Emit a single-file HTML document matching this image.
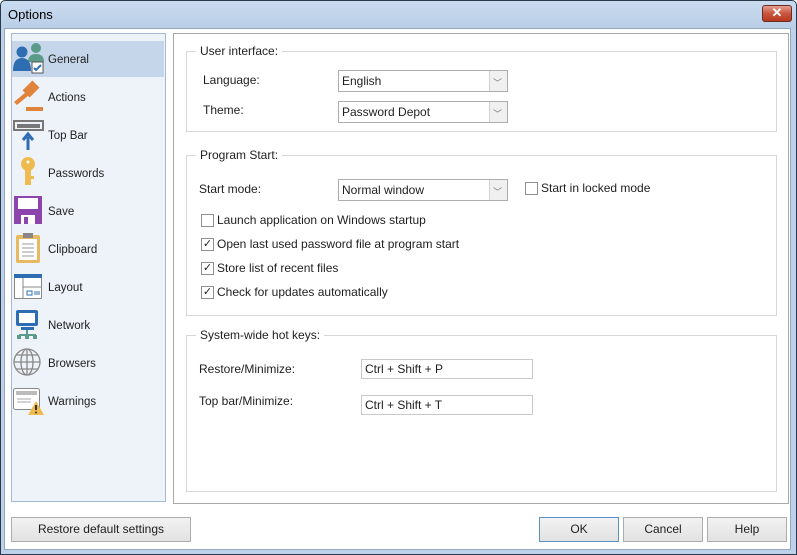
<!DOCTYPE html>
<html><head><meta charset="utf-8"><style>
*{box-sizing:border-box;margin:0;padding:0}
body{width:797px;height:555px;overflow:hidden;font-family:"Liberation Sans",sans-serif;font-size:12px;color:#1e1e1e;background:#fff;position:relative}
.a{position:absolute}
.frame{left:0;top:0;width:797px;height:555px;border:1px solid #2b3a4a;background:linear-gradient(#c9dbef,#b9cee7 28px,#bdd2ea 28px);border-radius:5px 5px 0 0}
.inner{left:4px;top:28px;width:787px;height:522px;background:#fff;border:1px solid #93a8c0}
.title{left:8px;top:7px;font-size:13px;color:#000}
.close{left:762px;top:5px;width:30px;height:17px;border:1px solid #6b2a22;border-radius:3px;background:linear-gradient(#e6a091,#c9553f 50%,#b8391f);color:#fff;font-weight:bold;text-align:center;font-size:13px;line-height:14px}
.left{left:11px;top:33px;width:155px;height:469px;background:#eef3fa;border:1px solid #a6b9d2}
.sel{left:12px;top:41px;width:152px;height:36px;background:#c5d6ea}
.item{left:48px;font-size:11.5px}
.right{left:173px;top:33px;width:616px;height:471px;border:1px solid #a9a9a9;background:#fff}
.grp{border:1px solid #d7d7d7}
.leg{background:#fff;padding:0 4px}
.combo{height:22px;border:1px solid #adadad;background:#fff;padding:3px 0 0 3px}
.combo:after{content:"";position:absolute;right:0;top:0;width:17px;height:20px;border-left:1px solid #d0d0d0;background:#f0f0f0}
.arr{position:absolute;right:5px;top:5px;z-index:2;color:#777;font-size:9px}
.cb{width:13px;height:13px;border:1px solid #8f8f8f;background:#fff;font-size:11px;line-height:11px;text-align:center;color:#222}
.inp{height:20px;border:1px solid #c9c9c9;padding:2px 0 0 3px;background:#fff}
.btn{height:25px;border:1px solid #acacac;background:linear-gradient(#f2f2f2,#e2e2e2);text-align:center;line-height:23px}
</style></head><body>
<div class="a frame"></div>
<div class="a title">Options</div>
<div class="a close">✕</div>
<div class="a inner"></div>

<div class="a left"></div>
<div class="a sel"></div>
<!-- icons -->
<svg class="a" style="left:12px;top:42px" width="34" height="420">
 <!-- general -->
 <circle cx="24" cy="6" r="5" fill="#5a9b8a"/><path d="M16 20q0-8 8-8t8 8z" fill="#5a9b8a"/>
 <circle cx="10" cy="10" r="5.5" fill="#2f6db3"/><path d="M1 29q0-13 9-13t9 13z" fill="#2f6db3"/>
 <rect x="20" y="20" width="11" height="11" fill="#fff" stroke="#555"/><path d="M22 26l2 2 5-5" stroke="#2f6db3" stroke-width="2" fill="none"/>
 <!-- actions -->
 <g transform="translate(0,38)"><path d="M2 22l12-10 3 3-12 10z" fill="#e0843c"/><rect x="14" y="2" width="10" height="14" transform="rotate(45 19 9)" fill="#e0843c"/><rect x="14" y="27" width="17" height="4" fill="#e0843c"/></g>
 <!-- top bar -->
 <g transform="translate(0,76)"><rect x="2" y="3" width="29" height="9" fill="none" stroke="#777" stroke-width="2"/><rect x="5" y="6" width="23" height="4" fill="#777"/><path d="M16 32V19M11 22l5-6 5 6" stroke="#2f6db3" stroke-width="3" fill="none"/></g>
 <!-- key -->
 <g transform="translate(0,114)"><circle cx="16" cy="8" r="7" fill="#efbb4f"/><rect x="13" y="12" width="6" height="17" fill="#efbb4f"/><rect x="19" y="20" width="3" height="3" fill="#efbb4f"/><circle cx="16" cy="6" r="1.5" fill="#fff"/></g>
 <!-- save -->
 <g transform="translate(0,152)"><rect x="2" y="2" width="28" height="28" fill="#8e44ad"/><rect x="6" y="4" width="20" height="11" fill="#fff"/><rect x="9" y="21" width="14" height="9" fill="#fff"/><rect x="12" y="23" width="4" height="7" fill="#8e44ad"/></g>
 <!-- clipboard -->
 <g transform="translate(0,190)"><rect x="4" y="3" width="24" height="28" rx="2" fill="#e8b960"/><rect x="7" y="7" width="18" height="21" fill="#fff"/><rect x="11" y="1" width="10" height="5" fill="#888"/><path d="M10 12h12M10 16h12M10 20h12M10 24h12" stroke="#999"/></g>
 <!-- layout -->
 <g transform="translate(0,228)"><rect x="2.5" y="4.5" width="27" height="24" fill="#fff" stroke="#888"/><rect x="2" y="4" width="28" height="4" fill="#2f6db3"/><path d="M11 8v21M11 17h19" stroke="#888"/><rect x="15" y="21" width="5" height="4" fill="none" stroke="#2f6db3"/><path d="M22 22h6M22 24h6" stroke="#2f6db3"/></g>
 <!-- network -->
 <g transform="translate(0,266)"><rect x="4" y="2" width="22" height="16" rx="2" fill="#2f6db3"/><rect x="7" y="5" width="16" height="10" fill="#fff"/><rect x="9" y="19" width="13" height="3" fill="#2f6db3"/><path d="M15 22v5M7 27h17" stroke="#5a9b8a" stroke-width="2"/><rect x="5" y="27" width="4" height="4" fill="#5a9b8a"/><rect x="13" y="27" width="4" height="4" fill="#5a9b8a"/><rect x="21" y="27" width="4" height="4" fill="#5a9b8a"/></g>
 <!-- browsers -->
 <g transform="translate(0,304)" fill="none" stroke="#888" stroke-width="1.3"><circle cx="15" cy="16" r="13"/><ellipse cx="15" cy="16" rx="6" ry="13"/><path d="M2 16h26M4 9h22M4 23h22M15 3v26"/></g>
 <!-- warnings -->
 <g transform="translate(0,342)"><rect x="1.5" y="4.5" width="26" height="21" rx="2" fill="#fff" stroke="#888"/><rect x="4" y="7" width="21" height="4" fill="#bbb"/><path d="M5 15h14M5 18h14" stroke="#aaa"/><path d="M24 17l8 14h-16z" fill="#efbb4f"/><path d="M24 21v5" stroke="#333" stroke-width="2"/><circle cx="24" cy="28.5" r="1" fill="#333"/></g>
</svg>
<div class="a item" style="top:54px">General</div>
<div class="a item" style="top:92px">Actions</div>
<div class="a item" style="top:130px">Top Bar</div>
<div class="a item" style="top:168px">Passwords</div>
<div class="a item" style="top:206px">Save</div>
<div class="a item" style="top:244px">Clipboard</div>
<div class="a item" style="top:282px">Layout</div>
<div class="a item" style="top:320px">Network</div>
<div class="a item" style="top:358px">Browsers</div>
<div class="a item" style="top:396px">Warnings</div>

<div class="a right"></div>
<div class="a grp" style="left:186px;top:51px;width:591px;height:81px"></div>
<div class="a leg" style="left:196px;top:44px">User interface:</div>
<div class="a" style="left:203px;top:73px">Language:</div>
<div class="a combo" style="left:338px;top:70px;width:170px">English<span class="arr">﹀</span></div>
<div class="a" style="left:203px;top:103px">Theme:</div>
<div class="a combo" style="left:338px;top:101px;width:170px">Password Depot<span class="arr">﹀</span></div>

<div class="a grp" style="left:186px;top:155px;width:591px;height:161px"></div>
<div class="a leg" style="left:196px;top:148px">Program Start:</div>
<div class="a" style="left:199px;top:182px">Start mode:</div>
<div class="a combo" style="left:338px;top:179px;width:170px">Normal window<span class="arr">﹀</span></div>
<div class="a cb" style="left:525px;top:182px"></div>
<div class="a" style="left:541px;top:181px">Start in locked mode</div>
<div class="a cb" style="left:201px;top:214px"></div>
<div class="a" style="left:217px;top:213px">Launch application on Windows startup</div>
<div class="a cb" style="left:201px;top:238px">✓</div>
<div class="a" style="left:217px;top:237px">Open last used password file at program start</div>
<div class="a cb" style="left:201px;top:262px">✓</div>
<div class="a" style="left:217px;top:261px">Store list of recent files</div>
<div class="a cb" style="left:201px;top:286px">✓</div>
<div class="a" style="left:217px;top:285px">Check for updates automatically</div>

<div class="a grp" style="left:186px;top:335px;width:591px;height:157px"></div>
<div class="a leg" style="left:196px;top:328px">System-wide hot keys:</div>
<div class="a" style="left:199px;top:362px">Restore/Minimize:</div>
<div class="a inp" style="left:361px;top:359px;width:172px">Ctrl + Shift + P</div>
<div class="a" style="left:199px;top:394px">Top bar/Minimize:</div>
<div class="a inp" style="left:361px;top:395px;width:172px">Ctrl + Shift + T</div>

<div class="a btn" style="left:11px;top:517px;width:180px">Restore default settings</div>
<div class="a btn" style="left:539px;top:517px;width:80px;border-color:#5c8fc4">OK</div>
<div class="a btn" style="left:623px;top:517px;width:80px">Cancel</div>
<div class="a btn" style="left:707px;top:517px;width:80px">Help</div>
</body></html>
